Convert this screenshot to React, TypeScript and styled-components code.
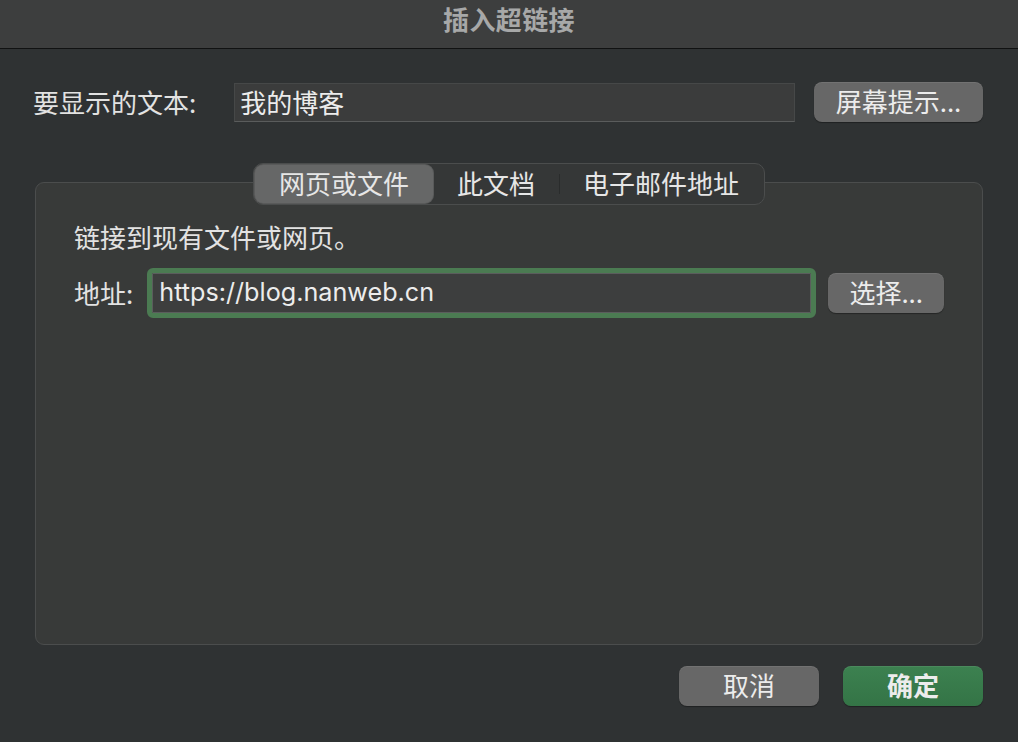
import React from "react";
import styled, { createGlobalStyle } from "styled-components";

const GlobalStyle = createGlobalStyle`
  html, body { margin: 0; padding: 0; background: #2f3233; }
  body { font-family: "Noto Sans CJK SC", "Noto Sans", sans-serif; }
  * { box-sizing: border-box; }
`;

const Window = styled.div`
  width: 1018px;
  height: 742px;
  background: #2f3233;
  display: flex;
  flex-direction: column;
  overflow: hidden;
`;

const TitleBar = styled.div`
  height: 49px;
  flex: none;
  background: #3d3e3e;
  border-bottom: 1px solid #111212;
  display: flex;
  align-items: center;
  justify-content: center;
  color: #a7a8a8;
  font-size: 26px;
  font-weight: 700;
  letter-spacing: 0.4px;
  padding-bottom: 12px;
`;

const Body = styled.div`
  flex: 1;
  display: flex;
  flex-direction: column;
  padding: 33px 35px 0 35px;
  color: #e4e4e4;
  font-size: 26px;
`;

const TopRow = styled.div`
  display: flex;
  align-items: center;
  height: 40px;
`;

const Label = styled.span`
  line-height: 1;
  color: #e2e2e2;
  white-space: nowrap;
  margin-left: -2px;
`;

const TextField = styled.div`
  margin-left: 38px;
  width: 561px;
  height: 39px;
  background: #3b3c3c;
  border: 1px solid #464848;
  border-bottom-color: #5a5c5c;
  display: flex;
  align-items: center;
  padding-left: 5px;
  color: #ececec;
  font-size: 26px;
  line-height: 1;
`;

const Button = styled.button<{ $primary?: boolean; $w: number }>`
  width: ${(p) => p.$w}px;
  height: 40px;
  border: none;
  border-radius: 8px;
  background: ${(p) => (p.$primary ? "linear-gradient(#3c8150, #347446)" : "#676767")};
  box-shadow: 0 1px 1px rgba(0, 0, 0, 0.35), inset 0 1px 0 rgba(255, 255, 255, 0.08);
  color: #ececec;
  font-family: "Noto Sans CJK SC", "Noto Sans", sans-serif;
  font-size: 26px;
  font-weight: ${(p) => (p.$primary ? 700 : 400)};
  line-height: 1;
  padding: 0 0 2px 0;
  display: flex;
  align-items: center;
  justify-content: center;
  flex: none;
`;

const TopButton = styled(Button)`
  margin-left: auto;
`;

const TabsWrap = styled.div`
  margin-top: 41px;
  display: flex;
  justify-content: center;
  position: relative;
  z-index: 1;
`;

const Segmented = styled.div`
  display: flex;
  align-items: center;
  height: 42px;
  border: 1px solid #4b4d4d;
  border-radius: 10px;
  background: #353737;
  padding: 1px;
`;

const Tab = styled.div<{ $active?: boolean; $divider?: boolean }>`
  height: 38px;
  display: flex;
  align-items: center;
  padding: 0 24px 2px 24px;
  border-radius: 8px;
  background: ${(p) => (p.$active ? "#666767" : "transparent")};
  box-shadow: ${(p) => (p.$active ? "0 0 0 1px #595a5a" : "none")};
  color: #e6e6e6;
  font-size: 26px;
  line-height: 1;
  position: relative;
  white-space: nowrap;
  ${(p) =>
    p.$divider
      ? `&::before { content: ""; position: absolute; left: 0; top: 9px; bottom: 9px; width: 1px; background: #2a2c2c; }`
      : ""}
`;

const Panel = styled.div`
  margin-top: -23px;
  height: 463px;
  border: 1px solid #4b4d4d;
  border-radius: 9px;
  background: #383a39;
  padding: 37px 0 0 40px;
  display: flex;
  flex-direction: column;
`;

const PanelText = styled.div`
  line-height: 34px;
  color: #e2e2e2;
  margin-left: -2px;
`;

const AddrRow = styled.div`
  margin-top: 14px;
  display: flex;
  align-items: center;
`;

const FocusField = styled.div`
  margin-left: 14px;
  width: 669px;
  height: 50px;
  border: 5px solid #4b7b52;
  border-radius: 6px;
  background: #3d3e3e;
  display: flex;
  align-items: center;
  padding-left: 7px;
  padding-bottom: 2px;
  font-family: "Inter", "Noto Sans", sans-serif;
  font-size: 25.2px;
  color: #ececec;
  box-shadow: inset 0 0 0 1px #5b5d5d;
`;

const SideButton = styled(Button)`
  margin-left: 12px;
`;

const Footer = styled.div`
  margin-top: 21px;
  display: flex;
  justify-content: flex-end;
  gap: 24px;
`;

export default function App() {
  return (
    <>
      <GlobalStyle />
      <Window>
        <TitleBar>插入超链接</TitleBar>
        <Body>
          <TopRow>
            <Label>要显示的文本:</Label>
            <TextField>我的博客</TextField>
            <TopButton $w={169}>屏幕提示...</TopButton>
          </TopRow>
          <TabsWrap>
            <Segmented>
              <Tab $active>网页或文件</Tab>
              <Tab>此文档</Tab>
              <Tab $divider>电子邮件地址</Tab>
            </Segmented>
          </TabsWrap>
          <Panel>
            <PanelText>链接到现有文件或网页。</PanelText>
            <AddrRow>
              <Label>地址:</Label>
              <FocusField>https://blog.nanweb.cn</FocusField>
              <SideButton $w={116}>选择...</SideButton>
            </AddrRow>
          </Panel>
          <Footer>
            <Button $w={140}>取消</Button>
            <Button $w={140} $primary>
              确定
            </Button>
          </Footer>
        </Body>
      </Window>
    </>
  );
}
